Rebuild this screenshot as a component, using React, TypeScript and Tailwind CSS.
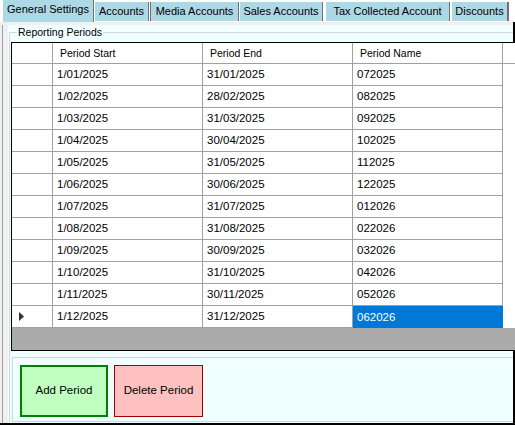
import React from "react";

const rows: [string, string, string][] = [
  ["1/01/2025", "31/01/2025", "072025"],
  ["1/02/2025", "28/02/2025", "082025"],
  ["1/03/2025", "31/03/2025", "092025"],
  ["1/04/2025", "30/04/2025", "102025"],
  ["1/05/2025", "31/05/2025", "112025"],
  ["1/06/2025", "30/06/2025", "122025"],
  ["1/07/2025", "31/07/2025", "012026"],
  ["1/08/2025", "31/08/2025", "022026"],
  ["1/09/2025", "30/09/2025", "032026"],
  ["1/10/2025", "31/10/2025", "042026"],
  ["1/11/2025", "30/11/2025", "052026"],
  ["1/12/2025", "31/12/2025", "062026"],
];

export default function App() {
  return (
    <div
      className="w-[515px] h-[425px] bg-white flex flex-col overflow-hidden text-[11px] text-black"
      style={{ fontFamily: '"Liberation Sans", Arial, sans-serif' }}
    >
      {/* Tab strip */}
      <div className="h-[22px] flex items-start shrink-0">
        <div className="ml-[3px] w-[91px] h-[22px] bg-[#add8e6] border-r border-[#707070] flex items-center justify-center pb-[3px]">
          General Settings
        </div>
        <div className="ml-[1px] mt-[2px] w-[54px] h-[19px] bg-[#add8e6] border-r border-[#707070] flex items-center justify-center">
          Accounts
        </div>
        <div className="ml-[1px] mt-[2px] w-[89px] h-[19px] bg-[#add8e6] border-l border-r border-[#707070] flex items-center justify-center">
          Media Accounts
        </div>
        <div className="ml-[1px] mt-[2px] w-[83px] h-[19px] bg-[#add8e6] border-r border-[#707070] flex items-center justify-center">
          Sales Accounts
        </div>
        <div className="ml-[3px] mt-[2px] w-[124px] h-[19px] bg-[#add8e6] border-r border-[#707070] flex items-center justify-center">
          Tax Collected Account
        </div>
        <div className="ml-[2px] mt-[2px] w-[57px] h-[19px] bg-[#add8e6] border-r-2 border-[#707070] flex items-center justify-center">
          Discounts
        </div>
      </div>

      {/* Tab page */}
      <div className="flex-1 min-h-0 flex bg-[#f0f0f0] border-r-2 border-b-2 border-black pl-[2px] pt-[3px]">
        <div className="flex-1 min-w-0 flex border-l border-[#a0a0a0] pl-[5px]">
          <div className="flex-1 min-w-0 flex flex-col bg-[#f0ffff]">
            <fieldset className="flex-1 min-w-0 mt-[1px] ml-[1px] border-t border-l border-[#d0d8dc] pl-[1px] pt-[3px] flex flex-col">
              <legend className="ml-[6px] px-[1px] leading-[13px] text-[10.5px]">Reporting Periods</legend>

              {/* Grid */}
              <div className="border border-black flex flex-col bg-white w-[510px] text-[11.5px]">
                <div className="h-[21px] flex border-b border-[#a0a0a0] text-[10.5px]">
                  <div className="w-[41px] border-r border-[#a0a0a0]" />
                  <div className="w-[150px] border-r border-[#a0a0a0] flex items-center pl-[7px] pt-[1px]">Period Start</div>
                  <div className="w-[150px] border-r border-[#a0a0a0] flex items-center pl-[7px] pt-[1px]">Period End</div>
                  <div className="w-[150px] border-r border-[#a0a0a0] flex items-center pl-[7px] pt-[1px]">Period Name</div>
                  <div className="flex-1" />
                </div>
                {rows.map((r, i) => {
                  const last = i === rows.length - 1;
                  return (
                    <div key={i} className="h-[22px] flex">
                      <div className="w-[41px] border-r border-b border-[#a0a0a0] flex items-center pl-[7px]">
                        {last && (
                          <svg width="6" height="9" viewBox="0 0 6 9">
                            <polygon points="0,0 5,4.5 0,9" fill="#333" />
                          </svg>
                        )}
                      </div>
                      <div className="w-[150px] border-r border-b border-[#a0a0a0] flex items-center pl-[4px] pt-[1px]">{r[0]}</div>
                      <div className="w-[150px] border-r border-b border-[#a0a0a0] flex items-center pl-[4px] pt-[1px]">{r[1]}</div>
                      {last ? (
                        <div className="w-[150px] bg-[#0078d7] text-white flex items-center pl-[4px] pt-[1px]">{r[2]}</div>
                      ) : (
                        <div className="w-[150px] border-r border-b border-[#a0a0a0] flex items-center pl-[4px] pt-[1px]">{r[2]}</div>
                      )}
                      <div className="flex-1" />
                    </div>
                  );
                })}
                <div className="h-[22px] bg-[#ababab]" />
              </div>

              {/* Button panel */}
              <div className="mt-[6px] ml-[1px] h-[65px] border-t border-l border-b border-[#d3d3d3] flex items-start gap-[6px] pl-[7px] pt-[7px] text-[11.5px]">
                <button className="w-[88px] h-[52px] border-2 border-[#008000] bg-[#c0ffc0] flex items-center justify-center">
                  Add Period
                </button>
                <button className="w-[89px] h-[52px] border border-[#a00000] bg-[#ffc0c0] flex items-center justify-center">
                  Delete Period
                </button>
              </div>
            </fieldset>
          </div>
        </div>
      </div>
    </div>
  );
}
